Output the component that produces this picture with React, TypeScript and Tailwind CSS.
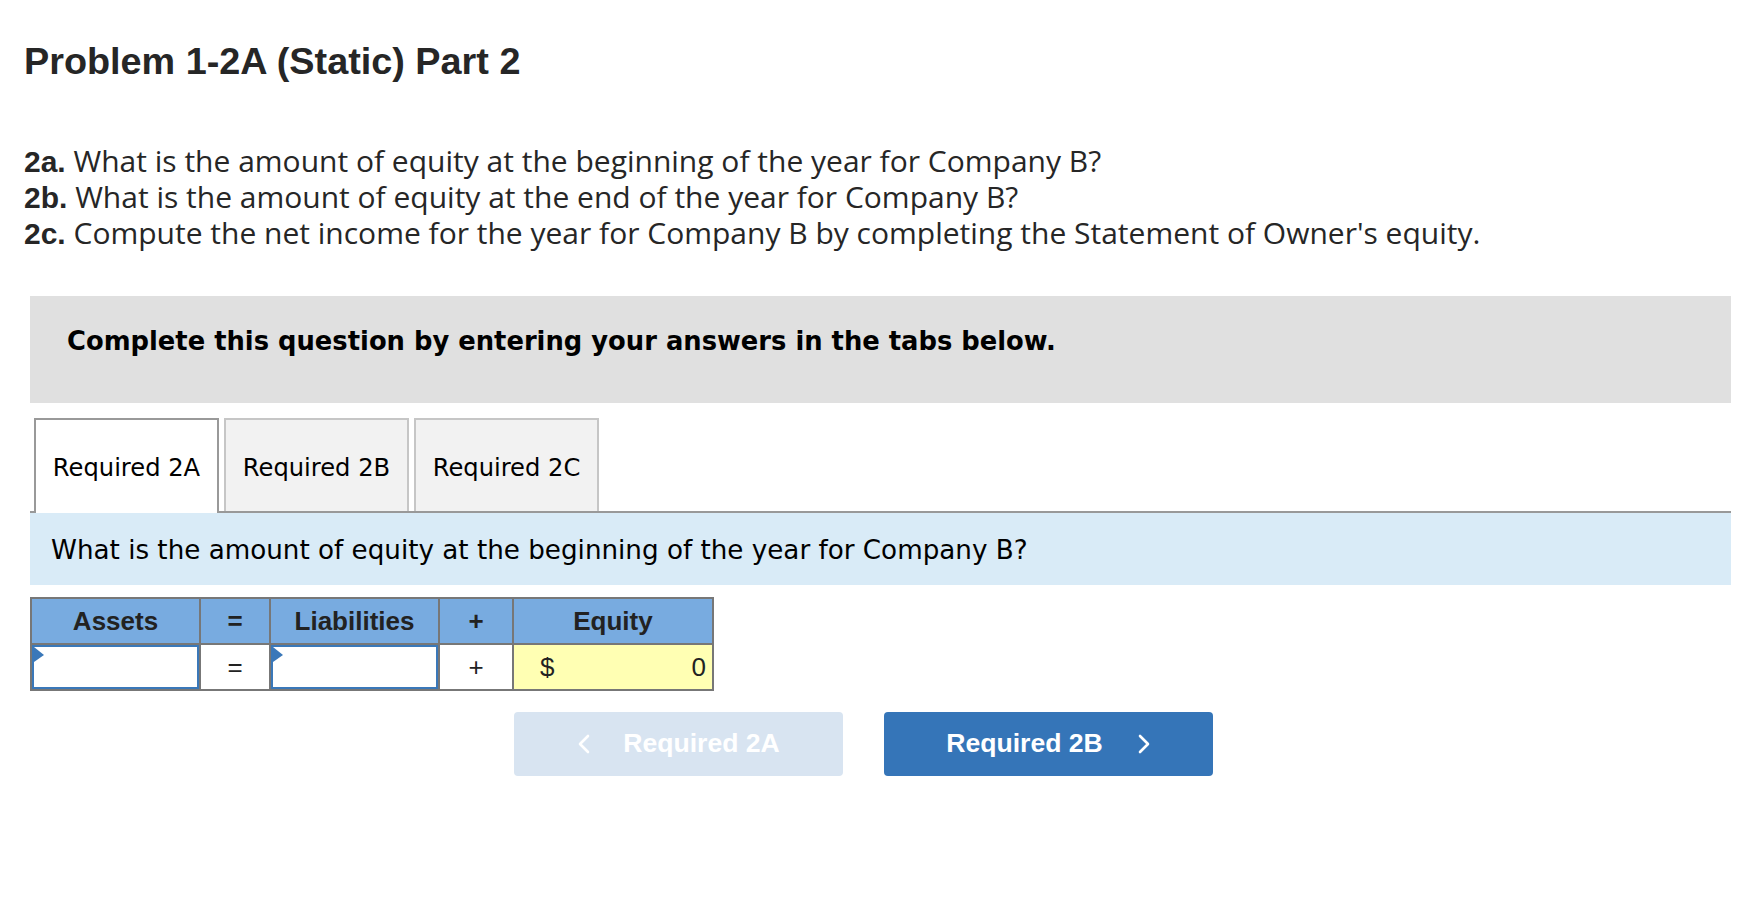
import React from "react";

const tabs = ["Required 2A", "Required 2B", "Required 2C"];

function Flag() {
  return (
    <svg className="absolute left-0 top-0" width="11" height="16" viewBox="0 0 11 16">
      <polygon points="0,0 10,8 0,15" fill="#3a78b9" />
    </svg>
  );
}

function Chevron({ dir }: { dir: "left" | "right" }) {
  return (
    <svg width="13" height="20" viewBox="0 0 13 20" fill="none">
      <polyline
        points={dir === "left" ? "11,2 3,10 11,18" : "2,2 10,10 2,18"}
        stroke="white"
        strokeWidth="2.6"
        strokeLinecap="round"
        strokeLinejoin="round"
      />
    </svg>
  );
}

export default function App() {
  return (
    <div className="min-h-screen bg-white pb-[40px] text-[#262626]">
      <div className="pl-[24px] pt-[39px]">
        <h1 className="font-['Liberation_Sans',Arial,sans-serif] text-[37.8px] font-bold leading-[45px]">
          Problem 1-2A (Static) Part 2
        </h1>
        <div className="mt-[59px] font-['Open_Sans',sans-serif] text-[30px] leading-[35px]">
          <p>
            <b className="font-['Liberation_Sans',Arial,sans-serif]">2a.</b> What is the amount of equity at the
            beginning of the year for Company B?
          </p>
          <p>
            <b className="font-['Liberation_Sans',Arial,sans-serif]">2b.</b> What is the amount of equity at the end
            of the year for Company B?
          </p>
          <p>
            <b className="font-['Liberation_Sans',Arial,sans-serif]">2c.</b> Compute the net income for the year for
            Company B by completing the Statement of Owner's equity.
          </p>
        </div>
      </div>

      <div className="ml-[30px] mr-[17px] mt-[45px] font-['DejaVu_Sans',Verdana,sans-serif]">
        <div className="h-[107px] bg-[#e0e0e0] pl-[37px] pt-[31px] text-[25.8px] font-bold leading-[28px] text-black">
          Complete this question by entering your answers in the tabs below.
        </div>

        <div className="mt-[15px] flex items-end border-b-2 border-[#999] pl-[4px]">
          {tabs.map((t, i) =>
            i === 0 ? (
              <div
                key={t}
                className="relative z-10 -mb-[2px] mr-[5px] flex h-[95px] w-[185px] items-center justify-center border-2 border-b-0 border-[#999] bg-white pt-[4px] text-[24.2px] text-black"
              >
                {t}
              </div>
            ) : (
              <div
                key={t}
                className="mr-[5px] flex h-[93px] w-[185px] items-center justify-center border-2 border-b-0 border-[#c6c6c6] bg-[#f2f2f2] pt-[6px] text-[24.2px] text-black"
              >
                {t}
              </div>
            )
          )}
        </div>

        <div className="flex h-[72px] items-center bg-[#d9ebf7] pl-[21px] pt-[4px] text-[26.2px] text-black">
          What is the amount of equity at the beginning of the year for Company B?
        </div>
      </div>

      <div className="ml-[30px] mt-[12px] font-['Liberation_Sans',Arial,sans-serif] text-[26px] text-[#222]">
        <div className="inline-grid grid-cols-[167px_68px_167px_72px_198px] gap-[2px] border-2 border-[#777] bg-[#777]">
          <div className="flex h-[44px] items-center justify-center bg-[#78abe0] font-bold">Assets</div>
          <div className="flex h-[44px] items-center justify-center bg-[#78abe0] font-bold">=</div>
          <div className="flex h-[44px] items-center justify-center bg-[#78abe0] font-bold">Liabilities</div>
          <div className="flex h-[44px] items-center justify-center bg-[#78abe0] font-bold">+</div>
          <div className="flex h-[44px] items-center justify-center bg-[#78abe0] font-bold">Equity</div>

          <div className="relative h-[44px] border-2 border-[#3a78b9] bg-white">
            <Flag />
          </div>
          <div className="flex h-[44px] items-center justify-center bg-white">=</div>
          <div className="relative h-[44px] border-2 border-[#3a78b9] bg-white">
            <Flag />
          </div>
          <div className="flex h-[44px] items-center justify-center bg-white">+</div>
          <div className="flex h-[44px] items-center justify-between bg-[#ffffb3] pl-[26px] pr-[6px]">
            <span>$</span>
            <span>0</span>
          </div>
        </div>

        <div className="ml-[484px] mt-[21px] flex gap-[41px] text-[26.6px] font-bold text-white">
          <div className="flex h-[64px] w-[329px] items-center justify-center gap-[33px] rounded-[4px] bg-[#d8e4f1]">
            <Chevron dir="left" />
            <span>Required 2A</span>
          </div>
          <div className="flex h-[64px] w-[329px] items-center justify-center gap-[35px] rounded-[4px] bg-[#3575b8]">
            <span>Required 2B</span>
            <Chevron dir="right" />
          </div>
        </div>
      </div>
    </div>
  );
}
